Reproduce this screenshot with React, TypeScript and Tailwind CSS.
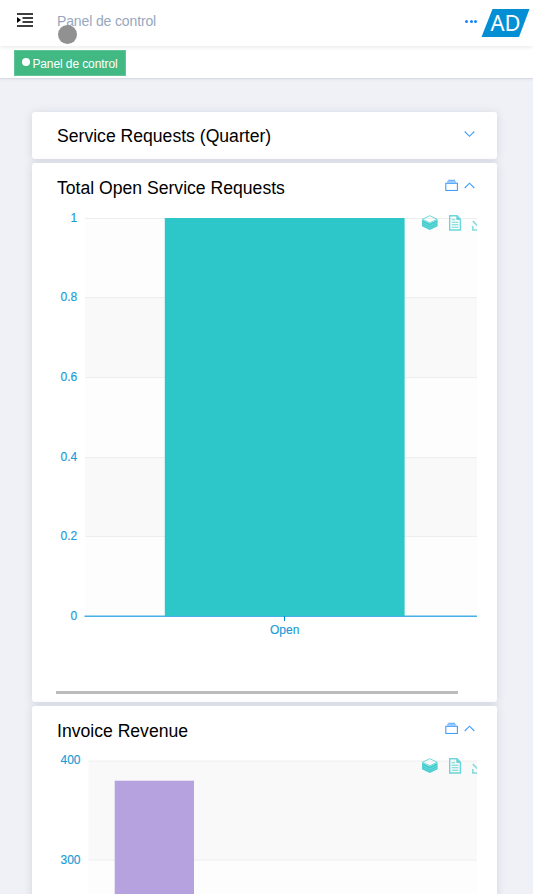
import type { ReactNode } from "react";

const CHART_FONT = '"Liberation Sans", Arial, sans-serif';

function MenuIcon() {
  return (
    <svg width="16" height="15" viewBox="0 0 16 15" className="block" aria-hidden="true">
      <path d="M0 1H16M5.5 5H16M5.5 9H16M0 13H16" stroke="#000" strokeWidth="1.4" fill="none" />
      <path d="M0 4v6l4-3z" fill="#000" />
    </svg>
  );
}

function BrandLogo() {
  return (
    <svg width="50" height="30" viewBox="0 0 50 30" className="block" aria-label="AD">
      <path d="M12.5 1H49.5L39 29H1.5z" fill="#048fd5" />
      <text x="10.5" y="22.5" fontSize="22" fontFamily='"Noto Sans", sans-serif' fill="#fff" textLength="30" lengthAdjust="spacingAndGlyphs">
        AD
      </text>
    </svg>
  );
}

function Chevron({ up = false }: { up?: boolean }) {
  return (
    <svg width="12" height="8" viewBox="0 0 12 8" className="block" fill="none" stroke="#409eff" strokeWidth="1.1" aria-hidden="true">
      <path d={up ? "M.7 7L5.5 2.2L10.3 7" : "M.7 1.5L5.5 6.3L10.3 1.5"} />
    </svg>
  );
}

function BoxIcon() {
  return (
    <svg width="14" height="12" viewBox="0 0 14 12" className="block" fill="none" stroke="#409eff" aria-hidden="true">
      <rect x="0.8" y="4.3" width="11.6" height="7.2" strokeWidth="1.1" />
      <path d="M2 2.8H11.2M3.2 1.3H10" strokeWidth="1.2" opacity="0.75" />
    </svg>
  );
}

function Toolbox({ y }: { y: number }) {
  return (
    <g transform={`translate(0 ${y})`} stroke="#2ec7c9" fill="none">
      <g transform="translate(366 0)">
        <path d="M7.8.7L15.2 4.2L7.8 7.8L.5 4.2z" strokeWidth="0.9" opacity="0.75" />
        <path d="M0 4.7L7.8 8.5L15.6 4.7V11.3L7.8 15L0 11.3z" fill="#2ec7c9" stroke="none" opacity="0.9" />
        <path d="M0 7.3L7.8 11L15.6 7.3M0 9.5L7.8 13.2L15.6 9.5" stroke="#b8eced" strokeWidth="0.35" />
      </g>
      <g transform="translate(393 0)" opacity="0.7">
        <path d="M.7.8H8L11.4 4.2V15H.7z" strokeWidth="1.4" />
        <path d="M7.8 1V4.5H11.4" fill="#2ec7c9" strokeWidth="1" />
        <path d="M2.7 4.7H6M2.7 7.2H9.5M2.7 9.7H9.5M2.7 12.2H9.5" strokeWidth="1.1" />
      </g>
      <path d="M416.8 6.1L421.5 10.8L426 6.1M416.8 11V15H427" strokeWidth="1.5" opacity="0.6" />
    </g>
  );
}

function RequestsChart() {
  const ticks = [
    { label: "1", y: 10.5 },
    { label: "0.8", y: 89.5 },
    { label: "0.6", y: 169.5 },
    { label: "0.4", y: 249.5 },
    { label: "0.2", y: 328.5 },
    { label: "0", y: 408.5 },
  ];
  return (
    <svg width="421" height="483" viewBox="0 0 421 483" className="block" fontFamily={CHART_FONT} fontSize="12">
      <rect x="29" y="10" width="392" height="398" fill="#fdfdfd" />
      <rect x="29" y="89" width="392" height="80" fill="#f9f9f9" />
      <rect x="29" y="249" width="392" height="79" fill="#f9f9f9" />
      {ticks.map((t) => (
        <g key={t.label}>
          <path d={`M29 ${t.y}H421`} stroke="#eee" />
          <text x="21.3" y={t.y + 3} textAnchor="end" fill="#199bd7" stroke="#199bd7" strokeWidth="0.15">{t.label}</text>
        </g>
      ))}
      <path d="M28.5 408.3H421" stroke="#45afe7" strokeWidth="1.4" />
      <path d="M228.5 408V413" stroke="#008acd" />
      <rect x="108.8" y="10" width="239.8" height="398" fill="#2ec7c9" />
      <text x="228.7" y="425.5" textAnchor="middle" fill="#199bd7" stroke="#199bd7" strokeWidth="0.15">Open</text>
      <Toolbox y={7} />
    </svg>
  );
}

function RevenueChart() {
  return (
    <svg width="421" height="500" viewBox="0 0 421 500" className="block" fontFamily={CHART_FONT} fontSize="12">
      <rect x="32.5" y="10" width="389" height="99" fill="#f9f9f9" />
      <rect x="32.5" y="109" width="389" height="100" fill="#fdfdfd" />
      <path d="M32.5 10H421M32.5 109H421" stroke="#eee" />
      <g fill="#199bd7" stroke="#199bd7" strokeWidth="0.15" textAnchor="end">
        <text x="24.5" y="13">400</text>
        <text x="24.5" y="113">300</text>
      </g>
      <rect x="58.7" y="29.7" width="79.3" height="380" fill="#b6a2de" />
      <Toolbox y={7} />
    </svg>
  );
}

function Card({ title, open = false, className, children }: { title: string; open?: boolean; className: string; children?: ReactNode }) {
  return (
    <section className={`w-[465px] shrink-0 rounded-[3px] bg-white shadow-[0_1px_10px_rgba(30,40,80,0.13)] ${className}`}>
      <header className="flex h-[45px] items-center justify-between pl-[25px] pr-[21px] pt-[4px]">
        <h2 className={`text-[17.6px] leading-6 whitespace-nowrap text-black ${open ? "" : "pb-[2px]"}`}>{title}</h2>
        <div className="mb-[5px] flex items-center gap-[5px]">
          {open && <BoxIcon />}
          <Chevron up={open} />
        </div>
      </header>
      {children}
    </section>
  );
}

export default function App() {
  return (
    <div className="relative flex h-[894px] w-[533px] flex-col overflow-hidden bg-[#eff1f6] font-['Liberation_Sans',Arial,sans-serif]">
      <nav className="z-10 flex h-[46px] shrink-0 items-center justify-between bg-white pl-[17px] pr-[3px] shadow-[0_1px_4px_rgba(0,21,41,0.1)]">
        <div className="flex items-center gap-6 pb-[5px]">
          <MenuIcon />
          <span className="pt-px text-sm leading-5 tracking-[-0.13px] text-[#97a8be]">Panel de control</span>
        </div>
        <div className="flex items-center gap-[3px]">
          <div className="mb-[3px] flex gap-[1.5px]">
            <i className="size-[3px] rounded-full bg-[#1684f4]" />
            <i className="size-[3px] rounded-full bg-[#1684f4]" />
            <i className="size-[3px] rounded-full bg-[#1684f4]" />
          </div>
          <BrandLogo />
        </div>
      </nav>
      <div className="flex h-[33px] shrink-0 items-start border-b border-[#d8dce5] bg-white pl-[14px] pt-[4px] shadow-[0_1px_3px_rgba(0,0,0,0.05)]">
        <div className="flex h-[26px] w-[112px] items-center border border-[#62c59a] bg-[#42b983] pl-[7.4px] text-[12px] tracking-[-0.1px] text-white">
          <i className="mb-[3px] mr-[2px] size-[8px] shrink-0 rounded-full bg-white" />
          <span className="whitespace-nowrap pt-[2px]">Panel de control</span>
        </div>
      </div>
      <main className="flex grow flex-col gap-[4px] overflow-hidden pl-8 pt-[33px]">
        <Card title="Service Requests (Quarter)" className="h-[47px]" />
        <Card title="Total Open Service Requests" open className="h-[539px]">
          <div className="overflow-hidden pl-[24px]">
            <RequestsChart />
            <div className="h-[3px] w-[402px] bg-[#bcbcbc]" />
          </div>
        </Card>
        <Card title="Invoice Revenue" open className="h-[560px]">
          <div className="overflow-hidden pl-[24px]">
            <RevenueChart />
          </div>
        </Card>
      </main>
      <div className="absolute left-[58px] top-[25px] z-20 size-[19px] rounded-full bg-[#919191]" />
    </div>
  );
}
